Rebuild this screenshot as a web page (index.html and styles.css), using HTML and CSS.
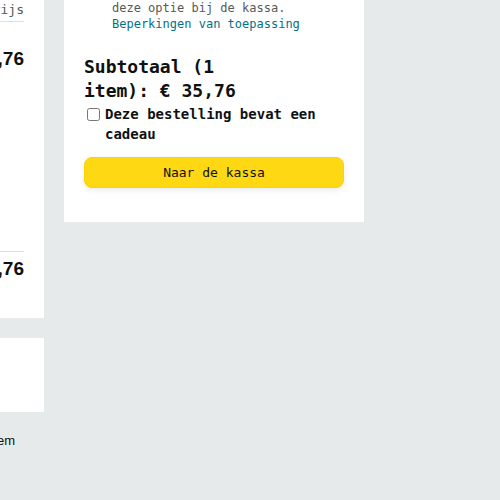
FILE: index.html
```html
<!DOCTYPE html>
<html lang="nl">
<head>
<meta charset="utf-8">
<title>Winkelwagen</title>
<link rel="stylesheet" href="styles.css">
</head>
<body>
<div class="page">
  <div class="main">
    <section class="cart">
      <div class="cart-head">Prijs</div>
      <div class="cart-item">
        <div class="price">€ 35,76</div>
      </div>
      <div class="cart-sub">
        <div class="price">€ 35,76</div>
      </div>
    </section>
    <section class="box"></section>
    <p class="foot">Subtotaal (1 item</p>
  </div>
  <aside class="buy">
    <p class="note">deze optie bij de kassa.<br><a class="link" href="#">Beperkingen van toepassing</a></p>
    <div class="subtotal">Subtotaal (1 <span class="nowrap">item): € 35,76</span></div>
    <label class="gift"><input type="checkbox" class="check"><span>Deze bestelling bevat een cadeau</span></label>
    <button class="checkout" type="button">Naar de kassa</button>
  </aside>
</div>
</body>
</html>
```
FILE: styles.css
```css
html, body {
  margin: 0;
  padding: 0;
}
body {
  background: #e7eaea;
  color: #0f1111;
  font-family: "DejaVu Sans Mono", "Liberation Mono", monospace;
  height: 500px;
  overflow: hidden;
}
.page {
  display: flex;
  align-items: flex-start;
  gap: 20px;
}
.main {
  width: 44px;
  overflow: hidden;
  display: flex;
  flex-direction: column;
  align-items: flex-end;
  flex: none;
}
.cart {
  width: 400px;
  height: 318px;
  background: #fff;
  padding: 0 20px;
  box-sizing: border-box;
}
.cart-head {
  font-size: 13px;
  line-height: 16px;
  color: #565959;
  text-align: right;
  padding: 2px 0 3px;
  border-bottom: 1px solid #dddddd;
}
.price {
  font-family: "Liberation Sans", Arial, sans-serif;
  font-weight: bold;
  font-size: 19px;
  line-height: 24px;
  text-align: right;
  white-space: nowrap;
}
.cart-item {
  box-sizing: border-box;
  height: 230px;
  padding-top: 25px;
  border-bottom: 1px solid #dddddd;
}
.cart-sub {
  padding-top: 5px;
}
.box {
  width: 400px;
  height: 74px;
  margin-top: 20px;
  background: #fff;
}
.foot {
  width: 400px;
  margin: 21px 0 0;
  padding-right: 29px;
  box-sizing: border-box;
  text-align: right;
  font-family: "Liberation Sans", Arial, sans-serif;
  font-size: 13px;
  line-height: 16px;
  color: #0f1111;
}
.buy {
  width: 300px;
  flex: none;
  background: #fff;
  padding: 0 20px 34px;
  box-sizing: border-box;
}
.note {
  margin: 0;
  padding-left: 28px;
  font-size: 12px;
  line-height: 16px;
  color: #565959;
}
.link {
  color: #007185;
  text-decoration: none;
}
.subtotal {
  margin-top: 23px;
  font-size: 18px;
  line-height: 24px;
  font-weight: bold;
}
.nowrap {
  white-space: nowrap;
}
.gift {
  display: flex;
  align-items: flex-start;
  margin-top: 1px;
  font-size: 14px;
  line-height: 20px;
  font-weight: bold;
}
.check {
  width: 13px;
  height: 13px;
  margin: 4px 5px 0 3px;
  flex: none;
}
.checkout {
  display: block;
  width: 100%;
  height: 31px;
  margin-top: 13px;
  background: #ffd814;
  border: 1px solid #fcd200;
  border-radius: 8px;
  box-shadow: 0 2px 5px 0 rgba(213, 217, 217, 0.5);
  font-family: "DejaVu Sans Mono", "Liberation Mono", monospace;
  font-size: 13px;
  color: #0f1111;
  padding: 0;
}
```
